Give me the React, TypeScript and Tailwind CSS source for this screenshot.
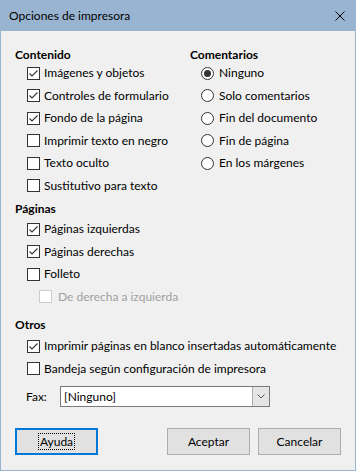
import React from "react";

const FONT = { fontFamily: '"Segoe UI", Lato, "Noto Sans", sans-serif' };

function Check({ checked, disabled }: { checked?: boolean; disabled?: boolean }) {
  return (
    <span
      className={`w-[13px] h-[13px] shrink-0 border bg-white flex items-center justify-center ${
        disabled ? "border-[#cccccc]" : "border-[#333333]"
      }`}
    >
      {checked && (
        <svg width="11" height="11" viewBox="0 0 11 11">
          <path d="M1.5 5.5 L4 8 L9.5 2.5" fill="none" stroke="#333333" strokeWidth="1.1" />
        </svg>
      )}
    </span>
  );
}

function CheckRow({ label, checked, disabled, indent }: { label: string; checked?: boolean; disabled?: boolean; indent?: boolean }) {
  return (
    <div className={`h-[22.5px] flex items-center whitespace-nowrap ${indent ? "pl-[24px] gap-[6px]" : "pl-[12px] gap-[4px]"}`}>
      <Check checked={checked} disabled={disabled} />
      <span className={disabled ? "text-[#a0a0a0]" : "text-black"}>{label}</span>
    </div>
  );
}

function RadioRow({ label, selected }: { label: string; selected?: boolean }) {
  return (
    <div className="h-[22.5px] flex items-center gap-[5px] pl-[11px] whitespace-nowrap">
      <span className="w-[13px] h-[13px] shrink-0 rounded-full border border-[#333333] bg-white flex items-center justify-center">
        {selected && <span className="w-[7px] h-[7px] rounded-full bg-[#333333]" />}
      </span>
      <span>{label}</span>
    </div>
  );
}

function Heading({ children, className = "" }: { children: React.ReactNode; className?: string }) {
  return <div className={`h-[14px] leading-[14px] font-bold ${className}`}>{children}</div>;
}

export default function App() {
  return (
    <div
      style={FONT}
      className="w-[356px] h-[471px] flex flex-col bg-[#f0f0f0] border border-t-0 border-[#99b4d1] text-[12px] text-black"
    >
      {/* Title bar */}
      <div className="h-[31px] shrink-0 bg-[#99b4d1] flex items-center justify-between pl-[8px] pr-[10px]">
        <span className="text-[12px]">Opciones de impresora</span>
        <svg width="10" height="10" viewBox="0 0 10 10">
          <path d="M0.5 0.5 L9.5 9.5 M9.5 0.5 L0.5 9.5" stroke="#000" strokeWidth="1" />
        </svg>
      </div>

      <div className="flex flex-col pl-[14px] pt-[17px]">
        <div className="grid grid-cols-[175px_1fr]">
          <div>
            <Heading>Contenido</Heading>
            <CheckRow label="Imágenes y objetos" checked />
            <CheckRow label="Controles de formulario" checked />
            <CheckRow label="Fondo de la página" checked />
            <CheckRow label="Imprimir texto en negro" />
            <CheckRow label="Texto oculto" />
            <CheckRow label="Sustitutivo para texto" />
          </div>
          <div>
            <Heading>Comentarios</Heading>
            <RadioRow label="Ninguno" selected />
            <RadioRow label="Solo comentarios" />
            <RadioRow label="Fin del documento" />
            <RadioRow label="Fin de página" />
            <RadioRow label="En los márgenes" />
          </div>
        </div>

        <Heading className="mt-[5px] mb-[2px]">Páginas</Heading>
        <CheckRow label="Páginas izquierdas" checked />
        <CheckRow label="Páginas derechas" checked />
        <CheckRow label="Folleto" />
        <CheckRow label="De derecha a izquierda" disabled indent />

        <Heading className="mt-[10px] mb-[3px]">Otros</Heading>
        <CheckRow label="Imprimir páginas en blanco insertadas automáticamente" checked />
        <CheckRow label="Bandeja según configuración de impresora" />

        <div className="mt-[6px] h-[21px] flex items-center pl-[11px]">
          <span className="w-[34px]">Fax:</span>
          <div className="w-[210px] h-[21px] bg-white border border-[#7a7a7a] flex items-center">
            <span className="flex-1 pl-[3px]">[Ninguno]</span>
            <span className="w-[17px] h-[19px] bg-[#e5e5e5] border-l border-[#acacac] flex items-center justify-center">
              <svg width="8" height="5" viewBox="0 0 8 5">
                <path d="M0.5 0.5 L4 4 L7.5 0.5" fill="none" stroke="#555" strokeWidth="1" />
              </svg>
            </span>
          </div>
        </div>

        <div className="mt-[21px] flex items-center pr-[14px]">
          <button className="w-[83px] h-[27px] bg-[#e1e1e1] border-2 border-[#0078d7] flex items-center justify-center">
            <span className="border border-dotted border-black px-[1px] leading-[15px]">Ayuda</span>
          </button>
          <div className="flex-1" />
          <button className="w-[83px] h-[27px] bg-[#e1e1e1] border border-[#adadad]">Aceptar</button>
          <button className="ml-[8px] w-[83px] h-[27px] bg-[#e1e1e1] border border-[#adadad]">Cancelar</button>
        </div>
      </div>
    </div>
  );
}
